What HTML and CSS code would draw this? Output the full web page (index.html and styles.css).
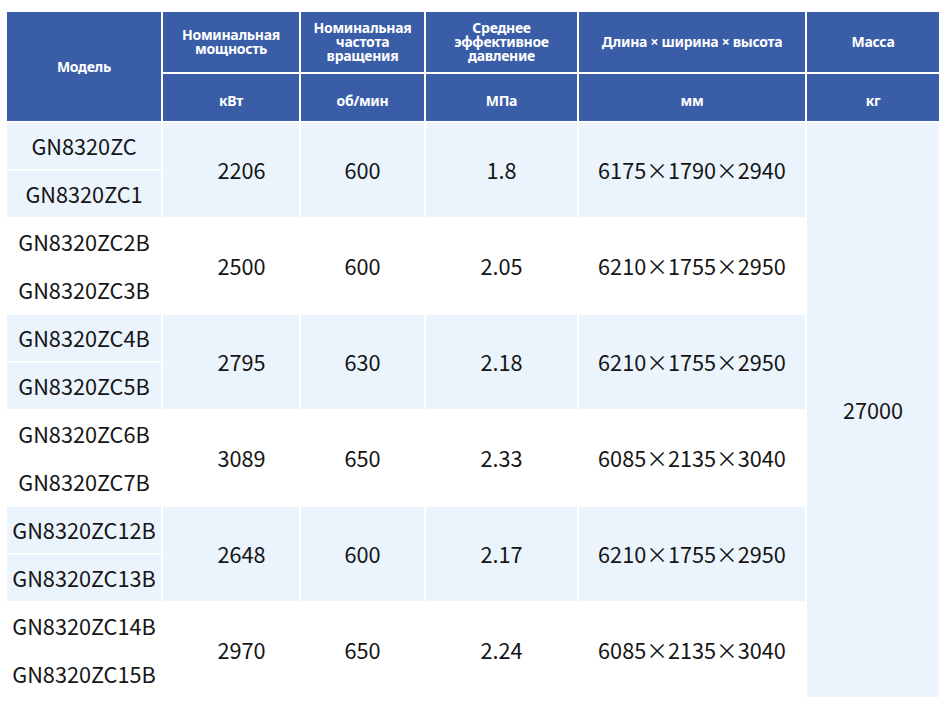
FILE: index.html
```html
<!DOCTYPE html>
<html lang="ru">
<head>
<meta charset="utf-8">
<title>Модели</title>
<link rel="stylesheet" href="styles.css">
</head>
<body>
<table class="spec">
  <colgroup>
    <col class="c1"><col class="c2"><col class="c3"><col class="c4"><col class="c5"><col class="c6">
  </colgroup>
  <thead>
    <tr class="h1">
      <th rowspan="2">Модель</th>
      <th>Номинальная<br>мощность</th>
      <th>Номинальная<br>частота<br>вращения</th>
      <th>Среднее<br>эффективное<br>давление</th>
      <th>Длина × ширина × высота</th>
      <th>Масса</th>
    </tr>
    <tr class="h2">
      <th>кВт</th>
      <th>об/мин</th>
      <th>МПа</th>
      <th>мм</th>
      <th>кг</th>
    </tr>
  </thead>
  <tbody>
    <tr class="alt">
      <td>GN8320ZC</td>
      <td rowspan="2" class="power">2206</td>
      <td rowspan="2">600</td>
      <td rowspan="2">1.8</td>
      <td rowspan="2">6175×1790×2940</td>
      <td rowspan="12" class="mass">27000</td>
    </tr>
    <tr class="alt"><td>GN8320ZC1</td></tr>
    <tr>
      <td>GN8320ZC2B</td>
      <td rowspan="2" class="power">2500</td>
      <td rowspan="2">600</td>
      <td rowspan="2">2.05</td>
      <td rowspan="2">6210×1755×2950</td>
    </tr>
    <tr><td>GN8320ZC3B</td></tr>
    <tr class="alt">
      <td>GN8320ZC4B</td>
      <td rowspan="2" class="power">2795</td>
      <td rowspan="2">630</td>
      <td rowspan="2">2.18</td>
      <td rowspan="2">6210×1755×2950</td>
    </tr>
    <tr class="alt"><td>GN8320ZC5B</td></tr>
    <tr>
      <td>GN8320ZC6B</td>
      <td rowspan="2" class="power">3089</td>
      <td rowspan="2">650</td>
      <td rowspan="2">2.33</td>
      <td rowspan="2">6085×2135×3040</td>
    </tr>
    <tr><td>GN8320ZC7B</td></tr>
    <tr class="alt">
      <td>GN8320ZC12B</td>
      <td rowspan="2" class="power">2648</td>
      <td rowspan="2">600</td>
      <td rowspan="2">2.17</td>
      <td rowspan="2">6210×1755×2950</td>
    </tr>
    <tr class="alt"><td>GN8320ZC13B</td></tr>
    <tr>
      <td>GN8320ZC14B</td>
      <td rowspan="2" class="power">2970</td>
      <td rowspan="2">650</td>
      <td rowspan="2">2.24</td>
      <td rowspan="2">6085×2135×3040</td>
    </tr>
    <tr><td>GN8320ZC15B</td></tr>
  </tbody>
</table>
</body>
</html>
```
FILE: styles.css
```css
html, body {
  margin: 0;
  padding: 0;
  background: #ffffff;
}

.spec {
  margin: 10px 0 0 5px;
  border-collapse: separate;
  border-spacing: 2px;
  table-layout: fixed;
  width: 936px;
  font-family: "Noto Sans CJK SC", "Noto Sans", sans-serif;
  color: #151515;
}

.c1 { width: 154px; }
.c2 { width: 136px; }
.c3 { width: 123px; }
.c4 { width: 151px; }
.c5 { width: 226px; }
.c6 { width: 132px; }

.spec th {
  background: #3a5da8;
  color: #ffffff;
  font-family: "Noto Sans", "Liberation Sans", sans-serif;
  font-weight: 700;
  font-size: 14px;
  line-height: 14px;
  letter-spacing: -0.3px;
  text-align: center;
  vertical-align: middle;
  padding: 0;
}

.spec .h1 th { height: 60px; }
.spec .h2 th { height: 47px; padding-top: 6px; box-sizing: border-box; }

.spec td {
  background: #ffffff;
  font-size: 21.7px;
  line-height: 24px;
  text-align: center;
  vertical-align: middle;
  padding: 0;
  height: 46px;
  white-space: nowrap;
}

.spec td.power {
  padding-left: 21px;
}

.spec tr.alt td,
.spec td.mass {
  background: #ebf4fc;
}
```
